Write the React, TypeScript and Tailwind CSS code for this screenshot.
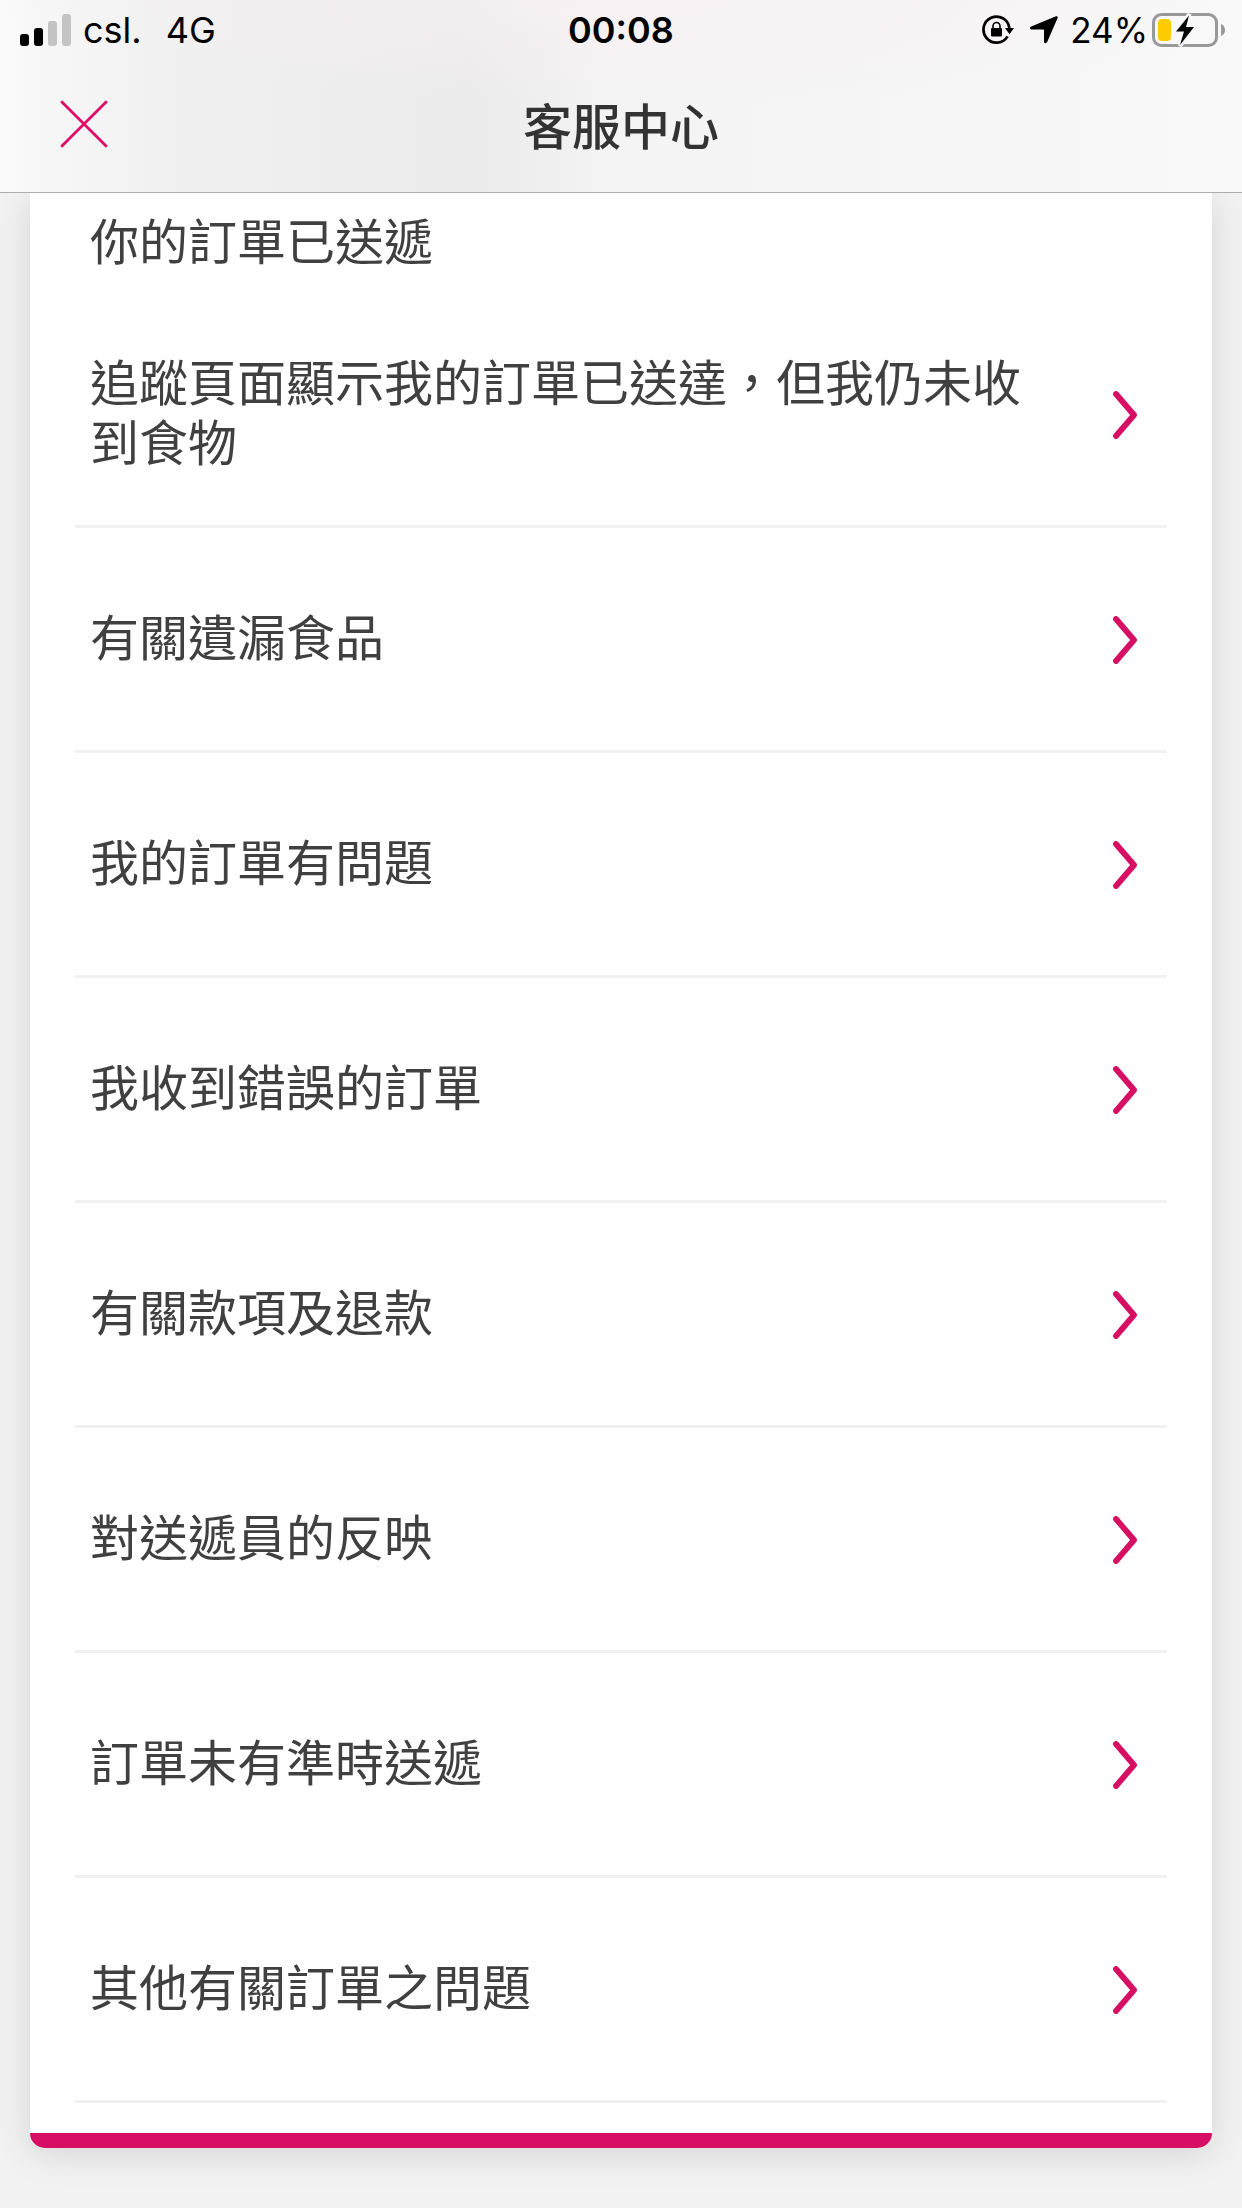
type Topic = {
  id: string;
  label: string;
};

const topics: Topic[] = [
  { id: 'not-received', label: '追蹤頁面顯示我的訂單已送達，但我仍未收到食物' },
  { id: 'missing-items', label: '有關遺漏食品' },
  { id: 'order-problem', label: '我的訂單有問題' },
  { id: 'wrong-order', label: '我收到錯誤的訂單' },
  { id: 'refund', label: '有關款項及退款' },
  { id: 'rider-feedback', label: '對送遞員的反映' },
  { id: 'late-order', label: '訂單未有準時送遞' },
  { id: 'other', label: '其他有關訂單之問題' },
];

function SignalIcon() {
  return (
    <svg width="51" height="32" viewBox="0 0 51 32" aria-hidden="true">
      <rect x="0" y="20" width="9" height="12" rx="3" fill="#000" />
      <rect x="14" y="14" width="9" height="18" rx="3" fill="#000" />
      <rect x="28" y="7" width="9" height="25" rx="3" fill="#c4c4c4" />
      <rect x="42" y="0" width="9" height="32" rx="3" fill="#c4c4c4" />
    </svg>
  );
}

function RotationLockIcon() {
  return (
    <svg width="32" height="30" viewBox="0 0 32 30" aria-hidden="true">
      <path d="M25.6 21.4A13 13 0 1 1 27.4 13" fill="none" stroke="#000" strokeWidth="2.7" />
      <path d="M23 13h9l-4.5 6.2z" fill="#000" />
      <rect x="9" y="13" width="11" height="8.5" rx="1" fill="#000" />
      <path d="M11 14v-3a3.5 3.5 0 0 1 7 0v3" fill="none" stroke="#000" strokeWidth="1.6" />
    </svg>
  );
}

function LocationIcon() {
  return (
    <svg width="28" height="28" viewBox="0 0 28 28" aria-hidden="true">
      <path
        d="M26 .3 1.2 10.5c-1.8.7-1.4 3 .4 3H13c.6 0 1 .4 1 1v11c0 2 2.4 2.4 3.2.6L27.6 2C28 .8 27.2-.1 26 .3z"
        fill="#000"
      />
    </svg>
  );
}

function BatteryIcon() {
  return (
    <svg width="74" height="34" viewBox="0 0 74 34" aria-hidden="true">
      <rect x="1.5" y="1.5" width="63" height="31" rx="8" fill="none" stroke="#999" strokeWidth="3" />
      <path d="M69 11c5.300 1.500 5.300 10.500 0 12z" fill="#999" />
      <rect x="6" y="6" width="13" height="22" rx="4" fill="#fc0" />
      <path
        d="M37.5 1 24 18.500h8L28 33l14-18.500h-8z"
        fill="#f7f6f6"
        stroke="#f7f6f6"
        strokeWidth="4"
      />
      <path d="M37 2.500 24 18.500h8L28 32l14-18h-8z" fill="#000" />
    </svg>
  );
}

function CloseIcon() {
  return (
    <svg width="48" height="48" viewBox="0 0 48 48" aria-hidden="true">
      <path d="M1.2 1.2l45.6 45.6M46.8 1.2L1.2 46.8" stroke="#df0d67" strokeWidth="2.8" />
    </svg>
  );
}

function ChevronIcon() {
  return (
    <svg width="24" height="48" viewBox="0 0 24 48" className="shrink-0" aria-hidden="true">
      <path
        d="M3 3l18 21L3 45"
        fill="none"
        stroke="#d70f64"
        strokeWidth="5.8"
        strokeLinecap="round"
        strokeLinejoin="round"
      />
    </svg>
  );
}

function StatusBar() {
  return (
    <div className="grid grid-cols-3 items-center h-16 px-4 pb-1 font-['Inter','Noto_Sans_CJK_TC',sans-serif] text-[35px] leading-[60px] text-black">
      <div className="flex items-center gap-3 pl-1 text-[36px]">
        <SignalIcon />
        <span>csl.</span>
        <span className="ml-3">4G</span>
      </div>
      <div className="text-center text-[36px] font-semibold">00:08</div>
      <div className="flex items-center justify-end gap-4">
        <RotationLockIcon />
        <div className="flex items-center gap-3">
          <LocationIcon />
          <div className="flex items-center gap-1">
            <span>24%</span>
            <BatteryIcon />
          </div>
        </div>
      </div>
    </div>
  );
}

function Header() {
  return (
    <header className="sticky top-0 z-10 border-b border-[#adadad] bg-[#f7f7f7] bg-[radial-gradient(ellipse_50%_55%_at_50%_0%,rgba(247,240,242,0.9),rgba(247,240,242,0)),linear-gradient(90deg,#fafafa_0%,#f1f1f1_12%,#eeeeee_25%,#ebebeb_38%,#f4f4f4_50%,#f6f6f6_75%,#f9f9f9_100%)]">
      <StatusBar />
      <div className="grid grid-cols-[1fr_auto_1fr] items-center h-32 px-[60px] pb-2">
        <button type="button" aria-label="關閉" className="justify-self-start">
          <CloseIcon />
        </button>
        <h1 className="text-[49px] leading-[60px] font-medium text-[#333]">客服中心</h1>
      </div>
    </header>
  );
}

function TopicRow({ topic }: { topic: Topic }) {
  return (
    <li className="border-b-3 border-[#f1f1f1]">
      <button
        type="button"
        className="flex w-full items-center justify-between gap-[60px] min-h-[222px] pt-0.5 pl-[15px] pr-[30px] text-left"
      >
        <span className="pb-2.5">{topic.label}</span>
        <ChevronIcon />
      </button>
    </li>
  );
}

export default function App() {
  return (
    <div
      lang="zh-Hant"
      className="min-h-screen bg-[#f2f2f2] font-['Noto_Sans_CJK_TC',sans-serif] text-[49px] leading-[60px] text-[#404040]"
    >
      <Header />
      <main className="px-[30px] pb-[60px]">
        <section className="rounded-b-[15px] border-b-[15px] border-[#d70f64] bg-white px-[45px] pt-4 pb-[30px] shadow-[0_6px_36px_rgba(0,0,0,0.12)]">
          <h2 className="px-[15px] pb-[34px]">你的訂單已送遞</h2>
          <ul>
            {topics.map((topic) => (
              <TopicRow key={topic.id} topic={topic} />
            ))}
          </ul>
        </section>
      </main>
    </div>
  );
}
